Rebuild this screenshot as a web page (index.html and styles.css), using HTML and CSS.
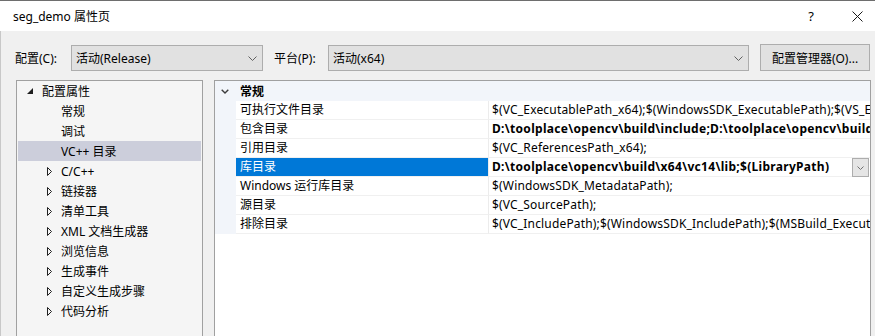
FILE: index.html
```html
<!DOCTYPE html>
<html lang="zh-CN">
<head>
    <meta charset="UTF-8">
    <title>seg_demo 属性页</title>
    <link rel="stylesheet" href="styles.css">
</head>
<body>
    <div class="titlebar">
        <span class="title">seg_demo 属性页</span>
        <span class="help">?</span>
        <svg class="close" width="11" height="11" viewBox="0 0 11 11">
            <path d="M0.5 0.5 L10.5 10.5 M10.5 0.5 L0.5 10.5" stroke="#1a1a1a" stroke-width="1" fill="none"/>
        </svg>
    </div>

    <div class="main">
        <div class="toolbar">
            <label class="lbl lbl-config">配置(C):</label>
            <div class="combo combo-config">
                <span>活动(Release)</span>
                <svg width="9" height="5" viewBox="0 0 9 5"><path d="M0.5 0.5 L4.5 4.5 L8.5 0.5" stroke="#606060" fill="none"/></svg>
            </div>
            <label class="lbl lbl-platform">平台(P):</label>
            <div class="combo combo-platform">
                <span>活动(x64)</span>
                <svg width="9" height="5" viewBox="0 0 9 5"><path d="M0.5 0.5 L4.5 4.5 L8.5 0.5" stroke="#606060" fill="none"/></svg>
            </div>
            <button class="btn-manager">配置管理器(O)...</button>
        </div>

        <div class="panels">
            <div class="tree">
                <div class="tree-item top">
                    <span class="twist"><svg width="6" height="6" viewBox="0 0 6 6"><path d="M6 0 L6 6 L0 6 Z" fill="#1e1e1e"/></svg></span>配置属性
                </div>
                <div class="tree-item leaf">常规</div>
                <div class="tree-item leaf">调试</div>
                <div class="tree-item leaf selected">VC++ 目录</div>
                <div class="tree-item child"><span class="twist"><svg width="6" height="9" viewBox="0 0 6 9"><path d="M0.5 0.5 L0.5 8.5 L4.5 4.5 Z" stroke="#1e1e1e" fill="none"/></svg></span>C/C++</div>
                <div class="tree-item child"><span class="twist"><svg width="6" height="9" viewBox="0 0 6 9"><path d="M0.5 0.5 L0.5 8.5 L4.5 4.5 Z" stroke="#1e1e1e" fill="none"/></svg></span>链接器</div>
                <div class="tree-item child"><span class="twist"><svg width="6" height="9" viewBox="0 0 6 9"><path d="M0.5 0.5 L0.5 8.5 L4.5 4.5 Z" stroke="#1e1e1e" fill="none"/></svg></span>清单工具</div>
                <div class="tree-item child"><span class="twist"><svg width="6" height="9" viewBox="0 0 6 9"><path d="M0.5 0.5 L0.5 8.5 L4.5 4.5 Z" stroke="#1e1e1e" fill="none"/></svg></span>XML 文档生成器</div>
                <div class="tree-item child"><span class="twist"><svg width="6" height="9" viewBox="0 0 6 9"><path d="M0.5 0.5 L0.5 8.5 L4.5 4.5 Z" stroke="#1e1e1e" fill="none"/></svg></span>浏览信息</div>
                <div class="tree-item child"><span class="twist"><svg width="6" height="9" viewBox="0 0 6 9"><path d="M0.5 0.5 L0.5 8.5 L4.5 4.5 Z" stroke="#1e1e1e" fill="none"/></svg></span>生成事件</div>
                <div class="tree-item child"><span class="twist"><svg width="6" height="9" viewBox="0 0 6 9"><path d="M0.5 0.5 L0.5 8.5 L4.5 4.5 Z" stroke="#1e1e1e" fill="none"/></svg></span>自定义生成步骤</div>
                <div class="tree-item child"><span class="twist"><svg width="6" height="9" viewBox="0 0 6 9"><path d="M0.5 0.5 L0.5 8.5 L4.5 4.5 Z" stroke="#1e1e1e" fill="none"/></svg></span>代码分析</div>
            </div>

            <div class="grid">
                <div class="grid-head">
                    <span class="gutter"><svg width="8" height="5" viewBox="0 0 8 5"><path d="M0.7 0.7 L4 4 L7.3 0.7" stroke="#3c3c3c" stroke-width="1.4" fill="none"/></svg></span>
                    <span class="head-title">常规</span>
                </div>
                <div class="row">
                    <span class="gutter"></span>
                    <span class="name">可执行文件目录</span>
                    <span class="value">$(VC_ExecutablePath_x64);$(WindowsSDK_ExecutablePath);$(VS_ExecutablePath);$(MSBuild_ExecutablePath);$(FxCopDir);$(PATH);</span>
                </div>
                <div class="row">
                    <span class="gutter"></span>
                    <span class="name">包含目录</span>
                    <span class="value bold">D:\toolplace\opencv\build\include;D:\toolplace\opencv\build\include\opencv2;$(IncludePath)</span>
                </div>
                <div class="row">
                    <span class="gutter"></span>
                    <span class="name">引用目录</span>
                    <span class="value">$(VC_ReferencesPath_x64);</span>
                </div>
                <div class="row active">
                    <span class="gutter"></span>
                    <span class="name">库目录</span>
                    <span class="value bold">D:\toolplace\opencv\build\x64\vc14\lib;$(LibraryPath)</span>
                    <span class="drop"><svg width="7" height="4" viewBox="0 0 7 4"><path d="M0.5 0.5 L3.5 3.5 L6.5 0.5" stroke="#707070" fill="none"/></svg></span>
                </div>
                <div class="row">
                    <span class="gutter"></span>
                    <span class="name">Windows 运行库目录</span>
                    <span class="value">$(WindowsSDK_MetadataPath);</span>
                </div>
                <div class="row">
                    <span class="gutter"></span>
                    <span class="name">源目录</span>
                    <span class="value">$(VC_SourcePath);</span>
                </div>
                <div class="row">
                    <span class="gutter"></span>
                    <span class="name">排除目录</span>
                    <span class="value">$(VC_IncludePath);$(WindowsSDK_IncludePath);$(MSBuild_ExecutablePath);$(VC_LibraryPath_x64);</span>
                </div>
            </div>
        </div>
    </div>
</body>
</html>
```

FILE: styles.css
```css
body {
    margin: 0;
    width: 875px;
    height: 336px;
    overflow: hidden;
    font-family: "Noto Sans", "Noto Sans CJK SC", sans-serif;
    font-size: 12px;
    color: #000;
    background-color: #f0f0f0;
}
.titlebar {
    display: flex;
    align-items: center;
    height: 30px;
    border-top: 1px solid #6e6e6e;
    background-color: #fff;
    padding-left: 13px;
}
.title {
    flex: 1;
}
.help {
    font-size: 13px;
    margin-right: 38px;
}
.close {
    margin-right: 12px;
}
.main {
    height: 305px;
    border-left: 1px solid #c8c8c8;
}
.toolbar {
    display: flex;
    padding-top: 13px;
    padding-left: 14px;
    height: 27px;
}
.lbl {
    align-self: center;
    margin-top: 1px;
}
.lbl-config {
    width: 56px;
}
.lbl-platform {
    width: 54px;
    margin-left: 11px;
}
.combo {
    display: flex;
    align-items: center;
    justify-content: space-between;
    box-sizing: border-box;
    height: 26px;
    margin-top: 1px;
    padding: 0 5px 0 4px;
    background-color: #e1e1e1;
    border: 1px solid #adadad;
}
.combo-config {
    width: 192px;
}
.combo-platform {
    width: 421px;
}
.btn-manager {
    box-sizing: border-box;
    width: 110px;
    height: 27px;
    margin-left: 11px;
    padding: 0;
    font-family: inherit;
    font-size: 12px;
    background-color: #e1e1e1;
    border: 1px solid #adadad;
}
.panels {
    display: flex;
    margin-top: 9px;
    padding-left: 15px;
}
.tree {
    box-sizing: border-box;
    width: 187px;
    height: 270px;
    padding: 0 1px;
    background-color: #f5f5f5;
    border: 1px solid #a0a0a0;
}
.tree-item {
    display: flex;
    align-items: center;
    height: 20px;
    white-space: nowrap;
}
.tree-item.top {
    padding-left: 9px;
}
.tree-item.top .twist {
    width: 15px;
}
.tree-item.leaf {
    padding-left: 43px;
}
.tree-item.child {
    padding-left: 29px;
}
.tree-item.child .twist {
    width: 14px;
}
.twist {
    display: flex;
    align-items: center;
}
.tree-item.selected {
    background-color: #cccedb;
}
.grid {
    box-sizing: border-box;
    width: 657px;
    height: 270px;
    margin-left: 11px;
    background-color: #fff;
    border: 1px solid #a0a0a0;
    overflow: hidden;
}
.grid-head {
    display: flex;
    height: 20px;
    background-color: #f2f5fa;
}
.gutter {
    flex: none;
    width: 21px;
    background-color: #f2f5fa;
    display: flex;
    align-items: center;
    justify-content: center;
    padding-right: 2px;
    box-sizing: border-box;
}
.head-title {
    display: flex;
    align-items: center;
    padding-left: 4px;
    font-weight: bold;
}
.row {
    display: flex;
    height: 19px;
}
.name {
    flex: none;
    box-sizing: border-box;
    width: 253px;
    height: 19px;
    padding-left: 4px;
    line-height: 18px;
    border-bottom: 1px solid #f0f0f0;
    border-right: 1px solid #ececec;
    white-space: nowrap;
}
.value {
    flex: 1;
    min-width: 0;
    box-sizing: border-box;
    height: 19px;
    padding-left: 3px;
    line-height: 18px;
    letter-spacing: 0.17px;
    border-bottom: 1px solid #f0f0f0;
    white-space: nowrap;
    overflow: hidden;
}
.bold {
    font-weight: bold;
    letter-spacing: 0.3px;
}
.row.active .name {
    background-color: #0078d7;
    color: #fff;
}
.drop {
    flex: none;
    box-sizing: border-box;
    width: 17px;
    height: 19px;
    margin-right: 1px;
    display: flex;
    align-items: center;
    justify-content: center;
    background-color: #e5e5e5;
    border: 1px solid #adadad;
}
```
